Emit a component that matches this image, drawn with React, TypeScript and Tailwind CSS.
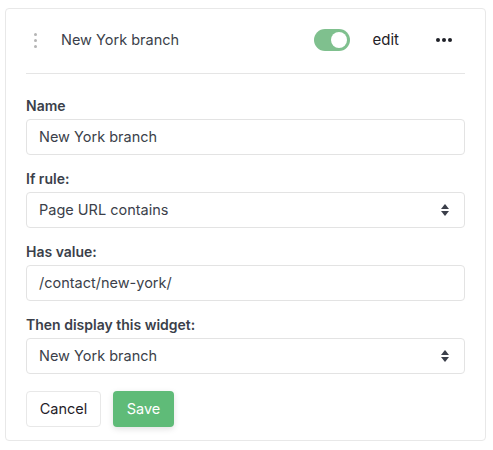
function Caret() {
  return (
    <svg width="10" height="14" viewBox="0 0 10 14" className="text-[#3b3f4a]">
      <path d="M5 1 L9 6 L1 6 Z" fill="currentColor" />
      <path d="M5 13 L9 8 L1 8 Z" fill="currentColor" />
    </svg>
  );
}

function Field({ label, value, select }: { label: string; value: string; select?: boolean }) {
  return (
    <div className="flex flex-col">
      <div className="text-[14px] font-semibold text-[#3b3f4a] leading-[20px] mb-[3px]">{label}</div>
      <div className="h-[36px] border border-[#e3e3e3] rounded-[4px] bg-white flex items-center pl-[12px] pr-[14px] justify-between">
        <span className="text-[14.5px] text-[#3b3f4a]">{value}</span>
        {select && <Caret />}
      </div>
    </div>
  );
}

export default function App() {
  return (
    <div className="w-[493px] h-[450px] bg-white pt-[8px] pl-[5px]" style={{ fontFamily: 'Inter, "Noto Sans", sans-serif' }}>
      <div className="w-[481px] h-[433px] border border-[#e8e8e8] rounded-[4px] px-[20px]">
        {/* header */}
        <div className="h-[65px] flex items-center border-b border-[#e5e5e5] pb-[2px]">
          <div className="flex flex-col gap-[3px] ml-[8px] w-[3px]">
            <span className="w-[3px] h-[3px] rounded-full bg-[#b5b5b5]" />
            <span className="w-[3px] h-[3px] rounded-full bg-[#b5b5b5]" />
            <span className="w-[3px] h-[3px] rounded-full bg-[#b5b5b5]" />
          </div>
          <span className="ml-[24px] text-[14.5px] text-[#3b3f4a]">New York branch</span>
          <div className="ml-auto w-[36px] h-[22px] rounded-full bg-[#7fc08e] flex items-center justify-end pr-[3px]">
            <span className="w-[16px] h-[16px] rounded-full bg-white" />
          </div>
          <span className="ml-[23px] text-[15px] text-[#1f2128]">edit</span>
          <div className="ml-[37px] mr-[13px] flex gap-[2px]">
            <span className="w-[4px] h-[4px] rounded-full bg-[#1f2128]" />
            <span className="w-[4px] h-[4px] rounded-full bg-[#1f2128]" />
            <span className="w-[4px] h-[4px] rounded-full bg-[#1f2128]" />
          </div>
        </div>

        <div className="flex flex-col gap-[14px] pt-[22px]">
          <Field label="Name" value="New York branch" />
          <Field label="If rule:" value="Page URL contains" select />
          <Field label="Has value:" value="/contact/new-york/" />
          <Field label="Then display this widget:" value="New York branch" select />
        </div>

        <div className="flex gap-[12px] mt-[17px]">
          <button className="h-[36px] w-[75px] border border-[#e8e8e8] rounded-[4px] bg-white text-[14.5px] text-[#1f2128]">Cancel</button>
          <button className="h-[36px] w-[61px] rounded-[4px] bg-[#5fbb78] text-[14.5px] text-white shadow-[0_2px_6px_rgba(0,0,0,0.12)]">Save</button>
        </div>
      </div>
    </div>
  );
}
